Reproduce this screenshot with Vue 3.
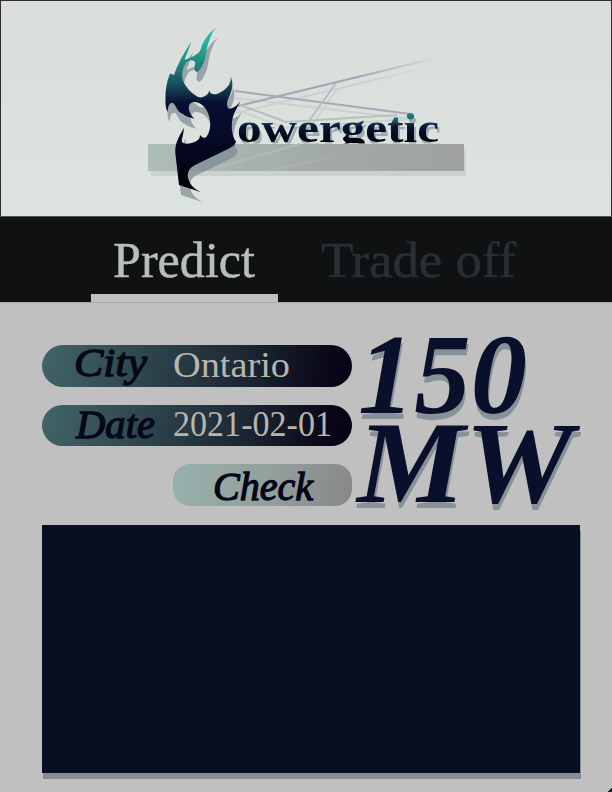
<script setup>
import { ref } from 'vue'

const tab = ref('predict')
const mark = 'M217 27C211 33 209 41 207 48C206 56 204 64 201 68C199 71 197 73 195.500 71C193 67 196 64 195 62C192 59 187 60 185 65C182 70 181 77 184 83C187 88 190 92 195 95C198 98 202 98 205 96C208 94 209 93 209 90C210 94 213 95 217 94C226 90 232 84 230.500 76C234 84 232 91 229 97C227 101 226 106 229 109C234 108 238 105 240.500 101C236 110 233 114 232 122C231 130 233 138 236 141.500C235 146 230 148 226 150L195 165C189 168 187 173 188 178C190 186 196 190 202 192.500L179 185L175.200 152C175 141 181 134 183.700 127.700C184 136 180 141 183 143C189 145 196 142 199 139Q200 137 200 135Q202 138 205 138C209 135 211 127 210 121C209 112 205 106 199 103C194 101 190 102 189 106C188 111 191 115 194.500 119C190 117 186 117 183 114C177 112 176 105 173 103Q170 102 168.500 106L167.500 112Q165 107 165.500 99Q165 86 170 73.500L174 75Q178 62 191 42C189 51 185 56 185 60C191 57 196 56 200 51C203 42 206 35 217 27Z'
</script>

<template>
  <main class="screen">
    <header class="brand">
      <svg class="logo" viewBox="0 0 612 216" role="img" aria-label="Powergetic">
        <defs>
          <linearGradient id="flame" gradientUnits="userSpaceOnUse" x1="0" y1="27" x2="0" y2="193">
            <stop offset="0" stop-color="#20cca6" /><stop offset=".13" stop-color="#20aa90" /><stop offset=".25" stop-color="#207a73" />
            <stop offset=".36" stop-color="#154754" /><stop offset=".46" stop-color="#080d32" />
            <stop offset=".63" stop-color="#080b2b" /><stop offset="1" stop-color="#000002" />
          </linearGradient>
          <linearGradient id="word" gradientUnits="userSpaceOnUse" x1="0" y1="112" x2="0" y2="144">
            <stop offset="0" stop-color="#238875" /><stop offset=".2" stop-color="#1d6e69" />
            <stop offset=".45" stop-color="#0a1536" /><stop offset="1" stop-color="#000002" />
          </linearGradient>
          <linearGradient id="bar"><stop offset="0" stop-color="#adbdb7" /><stop offset=".6" stop-color="#a1a8a5" /><stop offset="1" stop-color="#a0a39f" /></linearGradient>
          <linearGradient id="ray" gradientUnits="userSpaceOnUse" x1="235" y1="0" x2="440" y2="0">
            <stop offset="0" stop-color="#a6a7b8" /><stop offset=".6" stop-color="#a6a7b8" /><stop offset="1" stop-color="#a6a7b8" stop-opacity="0" />
          </linearGradient>
          <linearGradient id="ray-shade" gradientUnits="userSpaceOnUse" x1="235" y1="0" x2="446" y2="0">
            <stop offset="0" stop-color="#cbd1d0" /><stop offset=".6" stop-color="#cbd1d0" /><stop offset="1" stop-color="#cbd1d0" stop-opacity="0" />
          </linearGradient>
          <linearGradient id="glint" gradientUnits="userSpaceOnUse" x1="265" y1="0" x2="405" y2="0">
            <stop offset="0" stop-color="#b3b7ba" /><stop offset=".7" stop-color="#a4a6b2" /><stop offset="1" stop-color="#a4a6b2" stop-opacity="0" />
          </linearGradient>
          <clipPath id="above"><rect x="230" y="90" width="230" height="53.500" /></clipPath>
        </defs>
        <g fill="none" stroke="#cbd1d0" stroke-width="2">
          <path d="M236 113L445 63" stroke="url(#ray-shade)" />
          <path d="M235 98L411 119M237 110L286 128L409 119M312 125L338 88" />
        </g>
        <g fill="none" stroke-width="2">
          <path d="M238 106L440 57" stroke="url(#ray)" />
          <path d="M235 91L410 114" stroke="#a6a7b8" />
          <path d="M240 105L286 122L397 115M309 121L336 83" stroke="#b4c1bf" />
        </g>
        <path d="M151 149H466V176H151Z" fill="#cbd2ce" />
        <path d="M148 144H464V171H148Z" fill="url(#bar)" />
        <path d="M212 169L300 144" stroke="#b0bbb8" stroke-width="2" />
        <path d="M267 171L405 141" stroke="url(#glint)" stroke-width="1.500" />
        <path :d="mark" transform="translate(2 10)" fill="#7b8a92" fill-opacity=".7" />
        <g clip-path="url(#above)">
          <text class="wordmark" x="237" y="141.500" textLength="202" lengthAdjust="spacingAndGlyphs" fill="url(#word)">owergetic</text>
        </g>
        <path :d="mark" fill="url(#flame)" />
      </svg>
    </header>

    <nav class="tabs">
      <button class="tab predict" :class="{ active: tab === 'predict' }" @click="tab = 'predict'">
        <svg viewBox="0 0 187 77"><text x="22" y="59.500" textLength="142" lengthAdjust="spacingAndGlyphs">Predict</text></svg>
      </button>
      <button class="tab trade" :class="{ active: tab === 'trade' }" @click="tab = 'trade'">
        <svg viewBox="0 0 210 77"><text x="9" y="59.500" textLength="195" lengthAdjust="spacingAndGlyphs">Trade off</text></svg>
      </button>
    </nav>

    <section class="content">
      <div class="summary">
        <form class="fields" @submit.prevent>
          <div class="field">
            <svg viewBox="0 0 310 42">
              <text class="label" x="32" y="31" textLength="73" lengthAdjust="spacingAndGlyphs">City</text>
              <text class="value" x="131" y="32" textLength="117" lengthAdjust="spacingAndGlyphs">Ontario</text>
            </svg>
          </div>
          <div class="field">
            <svg viewBox="0 0 310 42">
              <text class="label" x="34" y="33" textLength="79" lengthAdjust="spacingAndGlyphs">Date</text>
              <text class="value" x="131" y="31" textLength="159" lengthAdjust="spacingAndGlyphs">2021-02-01</text>
            </svg>
          </div>
          <button class="check">
            <svg viewBox="0 0 179 42"><text class="label" x="40" y="36" textLength="100" lengthAdjust="spacingAndGlyphs">Check</text></svg>
          </button>
        </form>
        <svg class="result" viewBox="0 0 228 195">
          <text class="amount" x="6" y="82.500" textLength="169" lengthAdjust="spacingAndGlyphs">150</text>
          <text class="unit" x="5" y="171.500" textLength="216" lengthAdjust="spacingAndGlyphs">MW</text>
        </svg>
      </div>
      <div class="chart"></div>
    </section>
  </main>
</template>

<style>
body { margin: 0; background: #c0c0c0; }
</style>

<style scoped>
.screen { width: 612px; height: 792px; box-sizing: border-box; overflow: hidden; background: linear-gradient(135deg, transparent 50%, #17272b 50%) right bottom / 6px 4px no-repeat #c0c0c0; font-family: "Liberation Serif", serif; }
svg { display: block; overflow: visible; }
.brand { height: 216px; background: linear-gradient(#d9dddc, #dde4df); box-shadow: inset 1px 1px #302c2e, inset -1px 0 #302c2e; }
.logo { width: 612px; height: 216px; }
.wordmark { font-size: 43px; font-weight: 700; filter: drop-shadow(2px 4px 0 #9eabb0); }
.tabs { display: flex; gap: 34px; height: 86px; padding-left: 91px; box-sizing: border-box; background: #0f1112; border-top: 1px solid #4f5653; }
button { appearance: none; border: 0; padding: 0; background: none; font: inherit; }
.tab { display: flex; align-items: flex-start; height: 85px; box-sizing: border-box; color: #283033; }
.tab svg { width: 100%; height: 77px; fill: currentColor; stroke: currentColor; stroke-width: .5px; font-size: 51px; }
.predict { width: 187px; }
.trade { width: 210px; }
.tab.active { color: #b9bdbd; border-bottom: 8px solid #c0c0c0; }
.content { padding: 27px 32px 0 42px; border-top: 1px solid #a8a8a8; }
.summary { display: flex; height: 194.500px; }
.fields { display: flex; flex-direction: column; gap: 18px; width: 310px; flex: none; padding-top: 15px; }
.field { height: 41.500px; flex: none; border-radius: 21px; background: linear-gradient(100deg, #426467 0%, #304850 30%, #1e2936 63%, #0c0b1b 88%, #080014 100%); }
.field svg, .check svg { width: 100%; height: 42px; }
.label { font-size: 41px; font-style: italic; fill: #040717; stroke: #040717; stroke-width: 1.300px; }
.value { font-size: 35px; fill: #b5b6ae; }
.check { width: 179px; height: 41.500px; flex: none; align-self: flex-end; border-radius: 17px; background: linear-gradient(100deg, #98b1ac, #939f9d 55%, #878789); }
.result { width: 228px; height: 195px; flex: none; font-style: italic; font-weight: 700; fill: #0a102b; filter: drop-shadow(1px 6px 0 #879198); }
.amount { font-size: 114px; }
.unit { font-size: 117px; }
.chart { width: 538px; height: 248px; background: #090f22; box-shadow: 1px 6px #868d94; }
</style>
